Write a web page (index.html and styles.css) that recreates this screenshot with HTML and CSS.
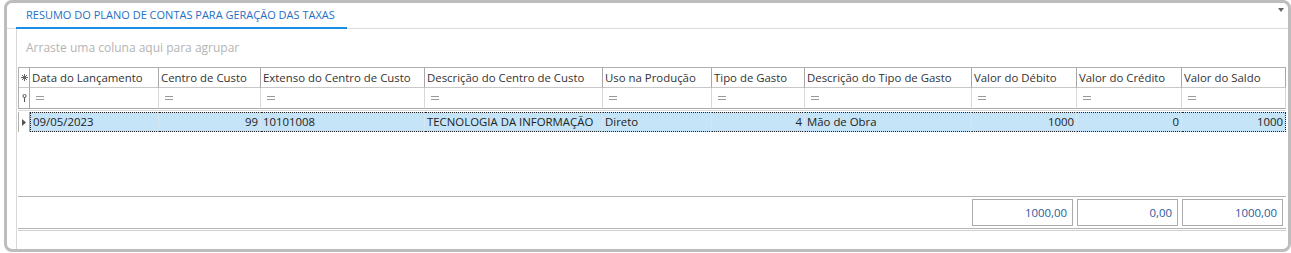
FILE: index.html
```html
<!DOCTYPE html>
<html lang="pt-BR">
<head>
    <meta charset="UTF-8">
    <title>Resumo do Plano de Contas</title>
    <link rel="stylesheet" href="styles.css">
</head>
<body>
    <div class="frame">
        <div class="tabs">
            <div class="tab active">RESUMO DO PLANO DE CONTAS PARA GERAÇÃO DAS TAXAS</div>
            <span class="tab-menu"></span>
        </div>

        <div class="page">
            <div class="group-panel">Arraste uma coluna aqui para agrupar</div>

            <div class="grid">
                <!-- Cabeçalho -->
                <div class="row header">
                    <div class="cell ind">
                        <svg width="7" height="7" viewBox="0 0 7 7"><path d="M3.5 0v7M0 3.5h7M1 1l5 5M6 1L1 6" stroke="#666" stroke-width="1"/></svg>
                    </div>
                    <div class="cell">Data do Lançamento</div>
                    <div class="cell">Centro de Custo</div>
                    <div class="cell">Extenso do Centro de Custo</div>
                    <div class="cell">Descrição do Centro de Custo</div>
                    <div class="cell">Uso na Produção</div>
                    <div class="cell">Tipo de Gasto</div>
                    <div class="cell">Descrição do Tipo de Gasto</div>
                    <div class="cell">Valor do Débito</div>
                    <div class="cell">Valor do Crédito</div>
                    <div class="cell">Valor do Saldo</div>
                </div>

                <!-- Linha de filtro -->
                <div class="row filter">
                    <div class="cell ind">
                        <svg width="5" height="8" viewBox="0 0 5 8"><circle cx="2.5" cy="2" r="1.6" fill="none" stroke="#555"/><path d="M2.5 3.5V8" stroke="#555"/></svg>
                    </div>
                    <div class="cell"><span class="eq"></span></div>
                    <div class="cell"><span class="eq"></span></div>
                    <div class="cell"><span class="eq"></span></div>
                    <div class="cell"><span class="eq"></span></div>
                    <div class="cell"><span class="eq"></span></div>
                    <div class="cell"><span class="eq"></span></div>
                    <div class="cell"><span class="eq"></span></div>
                    <div class="cell"><span class="eq"></span></div>
                    <div class="cell"><span class="eq"></span></div>
                    <div class="cell"><span class="eq"></span></div>
                </div>

                <div class="body">
                    <div class="row data">
                        <div class="cell ind">
                            <svg width="4" height="7" viewBox="0 0 4 7"><path d="M0 0l4 3.5L0 7z" fill="#555"/></svg>
                        </div>
                        <div class="cell first">09/05/2023</div>
                        <div class="cell num">99</div>
                        <div class="cell">10101008</div>
                        <div class="cell">TECNOLOGIA DA INFORMAÇÃO</div>
                        <div class="cell">Direto</div>
                        <div class="cell num">4</div>
                        <div class="cell">Mão de Obra</div>
                        <div class="cell num">1000</div>
                        <div class="cell num">0</div>
                        <div class="cell num last">1000</div>
                    </div>
                </div>

                <!-- Totais -->
                <div class="row footer">
                    <div class="cell span"></div>
                    <div class="cell"><div class="total">1000,00</div></div>
                    <div class="cell"><div class="total">0,00</div></div>
                    <div class="cell"><div class="total">1000,00</div></div>
                </div>
            </div>
        </div>
    </div>
</body>
</html>
```

FILE: styles.css
```css
body {
    margin: 0;
    font-family: 'Open Sans', sans-serif;
    font-size: 11px;
    color: #222;
    background: #fff;
}
.frame {
    box-sizing: border-box;
    margin-left: 4px;
    width: 1287px;
    height: 252px;
    border: 3px solid #bdbdbd;
    border-radius: 8px;
    display: flex;
    flex-direction: column;
}
.tabs {
    height: 25px;
    border-bottom: 1px solid #dcdcdc;
    padding-left: 9px;
    display: flex;
    align-items: flex-end;
}
.tab {
    box-sizing: border-box;
    width: 331px;
    height: 26px;
    margin-bottom: -1px;
    padding-left: 10px;
    line-height: 24px;
    color: #1f6fc2;
    border-bottom: 2px solid #1a8de6;
}
.tab-menu {
    align-self: flex-start;
    margin: 5px 4px 0 auto;
    width: 0;
    height: 0;
    border-left: 3px solid transparent;
    border-right: 3px solid transparent;
    border-top: 4px solid #666;
}
.page {
    flex: 1;
    margin-left: 9px;
    border-left: 1px solid #d8d8d8;
    display: flex;
    flex-direction: column;
}
.group-panel {
    height: 38px;
    line-height: 38px;
    padding-left: 9px;
    font-size: 12px;
    color: #b4b4b4;
}
.grid {
    box-sizing: border-box;
    margin-left: 1px;
    width: 1268px;
    height: 164px;
    font-size: 11.4px;
    border-top: 1px solid #b0b0b0;
    border-bottom: 1px solid #d0d0d0;
    display: flex;
    flex-direction: column;
}
.row {
    display: grid;
    grid-template-columns: 11px 129px 102px 164px 178px 109px 93px 167px 105px 105px 104px;
}
.cell {
    box-sizing: border-box;
    padding-left: 2px;
    white-space: nowrap;
    overflow: hidden;
}
.cell.ind {
    padding: 0;
    display: flex;
    align-items: center;
    justify-content: center;
}
.header, .filter {
    border-left: 1px solid #b0b0b0;
}
.header .cell {
    height: 20px;
    line-height: 19px;
    color: #333;
    border-right: 1px solid #a8a8a8;
    border-bottom: 1px solid #c8c8c8;
}
.filter .cell {
    height: 21px;
    border-right: 1px solid #d8d8d8;
    border-bottom: 1px solid #a8a8a8;
    display: flex;
    align-items: center;
    padding-left: 6px;
}
.filter .cell.ind {
    padding: 0;
    border-right-color: #a8a8a8;
    justify-content: center;
}
.eq {
    display: inline-block;
    width: 8px;
    height: 2px;
    border-top: 1px solid #9a9a9a;
    border-bottom: 1px solid #9a9a9a;
}
.body {
    flex: 1;
    margin-top: 1px;
    padding-top: 1px;
    border-top: 1px solid #dcdcdc;
}
.data {
    border-left: 1px solid #b0b0b0;
}
.data .cell {
    height: 20px;
    line-height: 18px;
    background: #c6e4f7;
    border-top: 1px dotted #222;
    border-bottom: 1px dotted #222;
    border-right: 1px solid #d6e6f0;
}
.data .cell.ind {
    background: #fff;
    border-top: none;
    border-bottom: none;
    border-right: 1px solid #a8a8a8;
}
.data .cell.first {
    border-left: 1px dotted #222;
}
.data .cell.last {
    border-right: 1px dotted #222;
}
.cell.num {
    text-align: right;
    padding: 0 2px 0 0;
}
.footer {
    height: 33px;
    border-top: 1px solid #b4b4b4;
    border-bottom: 1px solid #b4b4b4;
    margin-bottom: 1px;
    box-sizing: border-box;
}
.footer .span {
    grid-column: 1 / 9;
}
.footer .cell {
    padding: 2px 3px 0 1px;
}
.footer .cell:last-child {
    padding-right: 2px;
}
.total {
    box-sizing: border-box;
    height: 27px;
    line-height: 25px;
    border: 1px solid #ababab;
    text-align: right;
    padding-right: 5px;
    color: #265c9e;
}
```
